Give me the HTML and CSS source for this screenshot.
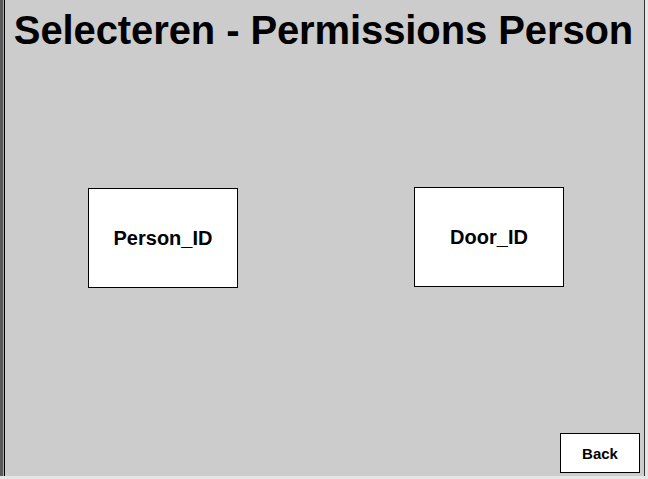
FILE: index.html
```html
<!DOCTYPE html>
<html lang="nl">
<head>
    <meta charset="UTF-8">
    <meta name="viewport" content="width=device-width, initial-scale=1.0">
    <title>Selecteren - Permissions Person</title>
    <link rel="stylesheet" href="styles.css">
</head>
<body>

    <div class="screen">
        <div class="panel">
            <h1 class="title">Selecteren - Permissions Person</h1>
            <div class="choices">
                <button class="choice">Person_ID</button>
                <button class="choice choice-door">Door_ID</button>
            </div>
            <div class="footer">
                <button class="back">Back</button>
            </div>
        </div>
    </div>

</body>
</html>
```

FILE: styles.css
```css
body {
    margin: 0;
    font-family: "Liberation Sans", Arial, sans-serif;
    background-color: #e6e6e6;
}
.screen {
    width: 641px;
    height: 476px;
    border-left: 3px solid #5a5a5a;
    padding-left: 1px;
    background-color: #a8a8a8;
}
.panel {
    display: flex;
    flex-direction: column;
    height: 477px;
    box-sizing: border-box;
    background-color: #cccccc;
    border-left: 1px solid #000;
    border-right: 1px solid #333;
    border-bottom: 1px solid #333;
}
.title {
    margin: 7px 0 0 -2px;
    font-size: 40px;
    font-weight: bold;
    line-height: 46px;
    letter-spacing: -0.1px;
    text-align: center;
    color: #000;
}
.choices {
    display: flex;
    justify-content: center;
    gap: 176px;
    padding-left: 3px;
    margin-top: 135px;
}
.choice {
    width: 150px;
    height: 100px;
    background: #fff;
    border: 1px solid #000;
    font-family: inherit;
    font-size: 20px;
    font-weight: bold;
    color: #000;
    padding: 0;
}
.choice-door {
    margin-top: -1px;
}
.footer {
    margin-top: auto;
    display: flex;
    justify-content: flex-end;
    padding: 0 4px 3px 0;
}
.back {
    width: 80px;
    height: 40px;
    background: #fff;
    border: 1px solid #000;
    font-family: inherit;
    font-size: 15px;
    font-weight: bold;
    color: #000;
    padding: 0;
}
```
